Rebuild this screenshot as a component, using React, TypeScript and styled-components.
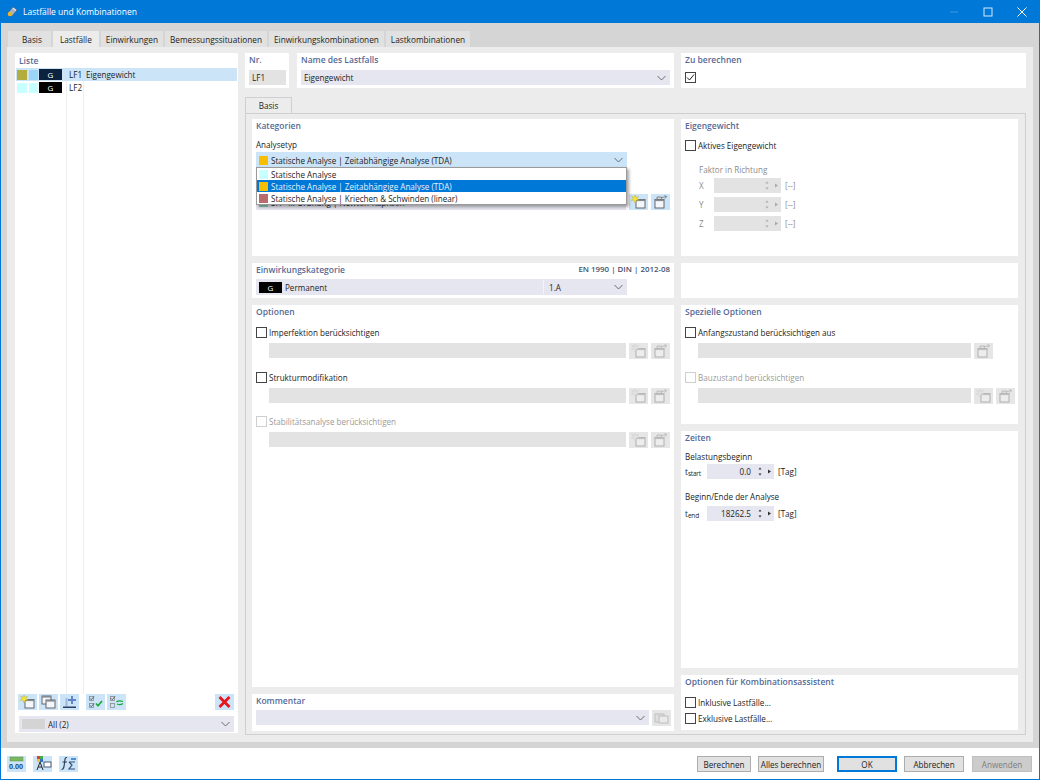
import React from 'react'
import styled, { createGlobalStyle } from 'styled-components'

const GlobalStyle = createGlobalStyle`
  html, body {
    margin: 0;
    padding: 0;
    background: #fff;
  }
  body {
    font-family: "Open Sans", "Liberation Sans", sans-serif;
    font-size: 8.1px;
    color: #1c1c1c;
  }
`

const Window = styled.div`
  width: 1040px;
  height: 780px;
  box-sizing: border-box;
  display: flex;
  flex-direction: column;
  border: 1px solid #0078d7;
  border-top: 0;
  background: #fff;
`

const TitleBar = styled.div`
  height: 23px;
  flex: none;
  background: #0078d7;
  color: #fff;
  display: flex;
  align-items: center;
  padding-left: 6px;
  font-size: 8.5px;
`

const TitleText = styled.span`
  flex: 1;
  margin-left: 5px;
`

const WinButton = styled.div`
  width: 34px;
  height: 23px;
  display: flex;
  align-items: center;
  justify-content: center;
`

const Client = styled.div`
  flex: 1;
  min-height: 0;
  background: #d6d5d6;
  padding: 8px 6px 6px;
  display: flex;
  flex-direction: column;
`

const TabBar = styled.div`
  display: flex;
  height: 16px;
  flex: none;
  padding-left: 1px;
  gap: 2px;
  font-size: 8.25px;
`

const Tab = styled.div<{ $active?: boolean; $left: number; $right: number }>`
  padding: 0 ${p => p.$right}px 0 ${p => p.$left}px;
  display: flex;
  align-items: center;
  background: ${p => (p.$active ? '#ececec' : '#e1e1e1')};
`

const Sheet = styled.div`
  flex: 1;
  min-height: 0;
  background: #ececec;
  padding: 6px 7px 9px 8px;
  display: grid;
  grid-template-columns: 223px 1fr;
  gap: 7px;
`

const Panel = styled.div<{ $h?: number; $w?: number; $grow?: boolean; $pull?: boolean }>`
  background: #fff;
  box-sizing: border-box;
  padding: 1px 4px 0;
  ${p => (p.$h ? `height: ${p.$h}px; flex: none;` : '')}
  ${p => (p.$w ? `width: ${p.$w}px; flex: none;` : '')}
  ${p => (p.$grow ? 'flex: 1; min-height: 0;' : '')}
  ${p => (p.$pull ? 'margin-left: -1px;' : '')}
  position: relative;
`

const ListPanel = styled.div`
  background: #fff;
  display: flex;
  flex-direction: column;
  height: 680px;
`

const Heading = styled.div`
  color: #566a96;
  font-weight: 600;
  height: 11px;
  line-height: 11px;
  font-size: 8.5px;
  display: flex;
  justify-content: space-between;
`

const ListHeading = styled(Heading)`
  padding: 2px 0 2px 4px;
`

const Standard = styled.span`
  color: #47536b;
  font-weight: 600;
  font-size: 7.9px;
`

const ListBody = styled.div`
  flex: 1;
  position: relative;
  background:
    linear-gradient(#eeeeee, #eeeeee) 51px 0 / 1px 100% no-repeat,
    linear-gradient(#eeeeee, #eeeeee) 68px 0 / 1px 100% no-repeat;
`

const ListRow = styled.div<{ $selected?: boolean }>`
  height: 13px;
  margin: 0 1px;
  display: flex;
  align-items: center;
  background: ${p => (p.$selected ? '#cce4f7' : 'transparent')};
`

const Swatch = styled.span<{ $color: string; $w?: number }>`
  width: ${p => p.$w ?? 10}px;
  height: 10px;
  flex: none;
  background: ${p => p.$color};
`

const SwatchGroup = styled.div`
  display: flex;
  gap: 2px;
  margin-left: 1px;
  width: 22px;
`

const Badge = styled.span<{ $color: string; $gap?: number }>`
  width: 23px;
  height: 11px;
  flex: none;
  margin-right: ${p => p.$gap ?? 0}px;
  background: ${p => p.$color};
  color: #fff;
  display: flex;
  align-items: center;
  justify-content: center;
  font-size: 8px;
`

const CaseNo = styled.span`
  width: 17px;
  margin-left: 7px;
  flex: none;
`

const ListFoot = styled.div`
  padding: 0 4px 1px;
`

const IconRow = styled.div`
  display: flex;
  height: 16px;
  margin-left: -1px;
  gap: 2px;
  margin-bottom: 6px;
`

const IconGap = styled.div`
  width: 3px;
  flex: none;
`

const Spacer = styled.div`
  flex: 1;
`

const VGap = styled.div<{ $h: number }>`
  height: ${p => p.$h}px;
`

const IconButton = styled.div<{ $disabled?: boolean }>`
  width: 19px;
  height: 16px;
  flex: none;
  background: ${p => (p.$disabled ? '#e6e6e6' : '#cce4f7')};
  display: flex;
  align-items: center;
  justify-content: center;
  svg {
    opacity: ${p => (p.$disabled ? 0.42 : 1)};
    filter: ${p => (p.$disabled ? 'grayscale(1)' : 'none')};
  }
`

const Select = styled.div<{ $tone?: 'plain' | 'hot'; $w?: number; $h?: number; $drop?: number }>`
  height: ${p => p.$h ?? 16}px;
  box-sizing: border-box;
  background: ${p => (p.$tone === 'hot' ? '#cce4f7' : '#e6e6f0')};
  display: flex;
  align-items: center;
  padding: 0 4px 0 3px;
  margin-top: ${p => p.$drop ?? 0}px;
  ${p => (p.$w ? `width: ${p.$w}px; flex: none;` : 'flex: 1; min-width: 0;')}
`

const SelectText = styled.span`
  flex: 1;
  white-space: nowrap;
  overflow: hidden;
`

const SmallSwatch = styled.span<{ $color: string; $w?: number; $h?: number }>`
  width: ${p => p.$w ?? 9}px;
  height: ${p => p.$h ?? 9}px;
  flex: none;
  margin-right: 3px;
  background: ${p => p.$color};
`

const Chevron = () => (
  <svg width="9" height="6" viewBox="0 0 9 6" fill="none" stroke="#6a6a6a" strokeWidth="1">
    <path d="M.5 1 4.500 5 8.500 1" />
  </svg>
)

type IconKind = 'new' | 'pick' | 'copy' | 'insert' | 'checkGreen' | 'checkSwap' | 'delete' | 'comment' | 'units' | 'model' | 'formula'

const Icon = ({ kind }: { kind: IconKind }) => {
  switch (kind) {
    case 'new':
      return (
        <svg width="15" height="14" viewBox="0 0 15 14">
          <rect x="5" y="4.500" width="9" height="8.500" fill="#f4f7fa" stroke="#55595f" strokeWidth=".9" />
          <rect x="5" y="4.500" width="9" height="1.600" fill="#868a90" />
          <path d="M4 0 4.800 2.400 7.500 1.200 6 3.700 8 5.200 5.300 5.100 4 8 2.900 5.100.2 5.400 2.200 3.600.6 1.200 3.200 2.400Z" fill="#f8e736" stroke="#b5a41c" strokeWidth=".4" />
        </svg>
      )
    case 'pick':
      return (
        <svg width="15" height="14" viewBox="0 0 15 14">
          <rect x="2" y="4.500" width="9" height="8.500" fill="#f4f7fa" stroke="#55595f" strokeWidth=".9" />
          <rect x="2" y="4.500" width="9" height="1.600" fill="#868a90" />
          <path d="M4 4V2H8.500V4" fill="#cfd3d8" stroke="#6f6f6f" strokeWidth=".8" />
          <path d="M9 2.500 13.500 1.500M13.500 1.500 11.500.5M13.500 1.500 12 3.500" fill="none" stroke="#6f6f6f" strokeWidth=".8" />
        </svg>
      )
    case 'copy':
      return (
        <svg width="15" height="14" viewBox="0 0 15 14">
          <rect x="1" y="1" width="9" height="8" fill="#f4f7fa" stroke="#55595f" strokeWidth=".9" />
          <rect x="1" y="1" width="9" height="1.600" fill="#868a90" />
          <rect x="5" y="5" width="9" height="8" fill="#f4f7fa" stroke="#55595f" strokeWidth=".9" />
          <rect x="5" y="5" width="9" height="1.600" fill="#868a90" />
        </svg>
      )
    case 'insert':
      return (
        <svg width="15" height="14" viewBox="0 0 15 14">
          <path d="M3.500 3H5.500V11.500H3.500Z" fill="#9db7dd" />
          <path d="M1 11.500H14V13H1Z" fill="#2c3f63" />
          <path d="M9 1H11V4H14V6H11V9H9V6H6V4H9Z" fill="#5f86c9" />
        </svg>
      )
    case 'checkGreen':
      return (
        <svg width="15" height="14" viewBox="0 0 15 14" fill="none">
          <rect x="1.500" y="1.500" width="4" height="4" stroke="#8a8a8a" strokeWidth=".8" />
          <rect x="1.500" y="8.500" width="4" height="4" stroke="#8a8a8a" strokeWidth=".8" />
          <path d="M2 3.300 3.300 4.700 6 1.500M2 10.300 3.300 11.700 6 8.500" stroke="#444" strokeWidth=".8" />
          <path d="M8 8.500 10 10.800 14 6" stroke="#1ba83b" strokeWidth="1.600" />
        </svg>
      )
    case 'checkSwap':
      return (
        <svg width="15" height="14" viewBox="0 0 15 14" fill="none">
          <rect x="1.500" y="1.500" width="4" height="4" stroke="#8a8a8a" strokeWidth=".8" />
          <rect x="1.500" y="8.500" width="4" height="4" stroke="#8a8a8a" strokeWidth=".8" />
          <path d="M2 3.300 3.300 4.700 6 1.500" stroke="#444" strokeWidth=".8" />
          <path d="M7.500 7C9 5.500 11 5.500 14 6.500M14 8.500C12 10 10 10 8 9" stroke="#1ba83b" strokeWidth="1.300" />
        </svg>
      )
    case 'delete':
      return (
        <svg width="15" height="14" viewBox="0 0 15 14" fill="none">
          <path d="M2.500 2 12.500 12M12.500 2 2.500 12" stroke="#e8141c" strokeWidth="2.800" />
        </svg>
      )
    case 'comment':
      return (
        <svg width="15" height="14" viewBox="0 0 15 14">
          <rect x="1" y="3" width="9" height="8" fill="#d8d8d8" stroke="#8a8a8a" />
          <rect x="5" y="5" width="9" height="7" fill="#f0f0f0" stroke="#8a8a8a" />
        </svg>
      )
    case 'units':
      return (
        <svg width="17" height="15" viewBox="0 0 17 15" fill="none">
          <rect x="2" y="1" width="13" height="4" fill="#7cb860" stroke="#58924a" strokeWidth=".5" />
          <text x="1" y="13" fontSize="7" fontFamily="Open Sans" fill="#2a4c7f" fontWeight="700">0.00</text>
        </svg>
      )
    case 'model':
      return (
        <svg width="18" height="15" viewBox="0 0 18 15">
          <rect x="3" y="0" width="3" height="3" fill="#e53b30" />
          <rect x="6" y="0" width="3" height="3" fill="#3cb04a" />
          <rect x="3" y="3" width="3" height="3" fill="#f2c22e" />
          <rect x="6" y="3" width="3" height="3" fill="#2f6fd0" />
          <path d="M6 6 3 14M6 6 9 14M4 11H8" stroke="#2a2a2a" fill="none" />
          <rect x="10" y="6" width="7" height="5" fill="#fff" stroke="#4a5a70" />
        </svg>
      )
    case 'formula':
      return (
        <svg width="17" height="15" viewBox="0 0 17 15" fill="none">
          <path d="M7 1.500C5 1 5 3 4.500 7S4 13.500 1.500 13.500" stroke="#2a3a52" strokeWidth="1.100" />
          <path d="M2.500 6H7" stroke="#2a3a52" />
          <path d="M9 6H15M9 6 12 9 9 13H15" stroke="#33507c" strokeWidth="1.200" />
          <path d="M11 3H16" stroke="#4d8fd0" strokeWidth="2" />
        </svg>
      )
  }
}

const Check = styled.span<{ $disabled?: boolean }>`
  width: 11px;
  height: 11px;
  box-sizing: border-box;
  flex: none;
  background: #fff;
  border: 1px solid ${p => (p.$disabled ? '#cfcfcf' : '#444')};
  display: flex;
  align-items: center;
  justify-content: center;
`

const CheckRow = styled.div<{ $disabled?: boolean; $top?: number }>`
  display: flex;
  align-items: center;
  gap: 2px;
  height: 11px;
  margin-top: ${p => p.$top ?? 0}px;
  color: ${p => (p.$disabled ? '#9a9a9a' : 'inherit')};
`

const OptionBlock = styled.div`
  height: 44.5px;
  box-sizing: border-box;
`

const OptionField = styled.div<{ $flush?: boolean; $top?: number }>`
  display: flex;
  gap: 3px;
  margin-top: ${p => p.$top ?? 5}px;
  padding-left: ${p => (p.$flush ? 0 : 13)}px;
`

const GreyInput = styled.div<{ $w?: number }>`
  height: 15px;
  background: #e3e3e3;
  ${p => (p.$w ? `width: ${p.$w}px; flex: none;` : 'flex: 1;')}
  display: flex;
  align-items: center;
  padding: 0 3px;
  box-sizing: border-box;
`

const FieldLabel = styled.div<{ $muted?: boolean; $top?: number; $bottom?: number; $left?: number }>`
  color: ${p => (p.$muted ? '#8c8c8c' : 'inherit')};
  height: 12px;
  line-height: 12px;
  margin: ${p => p.$top ?? 0}px 0 ${p => p.$bottom ?? 0}px ${p => p.$left ?? 0}px;
`

const TopRow = styled.div`
  display: flex;
  gap: 8px;
  height: 35px;
  flex: none;
`

const RightColumn = styled.div`
  display: flex;
  flex-direction: column;
  min-width: 0;
`

const SubTab = styled.div`
  margin-top: 9px;
  width: 47px;
  height: 16px;
  flex: none;
  box-sizing: border-box;
  background: #ececec;
  border: 1px solid #cfcfcf;
  border-bottom: 0;
  display: flex;
  align-items: center;
  justify-content: center;
`

const SubSheet = styled.div`
  height: 622px;
  box-sizing: border-box;
  border: 1px solid #cfcfcf;
  padding: 5px 7px 0 6px;
  display: grid;
  grid-template-columns: 422px 337px;
  gap: 7px;
`

const Stack = styled.div<{ $h: number }>`
  display: flex;
  flex-direction: column;
  gap: 7px;
  height: ${p => p.$h}px;
`

const TopField = styled.div<{ $top?: number }>`
  margin-top: ${p => p.$top ?? 5}px;
  display: flex;
`

const Popup = styled.div`
  position: absolute;
  left: 4px;
  top: 48px;
  width: 371px;
  box-sizing: border-box;
  background: #fff;
  border: 1px solid #9b9b9b;
  box-shadow: 2px 2px 3px rgba(0, 0, 0, 0.35);
  z-index: 2;
`

const PopupItem = styled.div<{ $selected?: boolean }>`
  height: 12px;
  display: flex;
  align-items: center;
  padding-left: 2px;
  background: ${p => (p.$selected ? '#0078d7' : 'transparent')};
  color: ${p => (p.$selected ? '#e8f2fb' : 'inherit')};
`

const Divider = styled.span`
  width: 1px;
  height: 14px;
  background: #f3f3f8;
  margin: 0 5px 0 0;
`

const Spin = ({ muted }: { muted?: boolean }) => (
  <svg width="18" height="11" viewBox="0 0 18 11" fill={muted ? '#a9a9a9' : '#333'}>
    <path d="M2.500 3.500 4 1.500 5.500 3.500ZM2.500 7.500 4 9.500 5.500 7.500ZM12 3.500 15 5.500 12 7.500Z" />
  </svg>
)

const UnitRow = styled.div<{ $muted?: boolean }>`
  display: flex;
  align-items: center;
  color: ${p => (p.$muted ? '#8c8c8c' : 'inherit')};
  height: 15px;
`

const AxisLabel = styled.span<{ $w: number }>`
  width: ${p => p.$w}px;
  flex: none;
`

const SpinField = styled.div<{ $muted?: boolean }>`
  width: 67px;
  height: 15px;
  box-sizing: border-box;
  background: ${p => (p.$muted ? '#e3e3e3' : '#e6e6f0')};
  display: flex;
  align-items: center;
  padding-left: 3px;
  margin-right: 4px;
`

const SpinValue = styled.span`
  flex: 1;
  text-align: right;
  padding-right: 5px;
`

const Sub = styled.span`
  font-size: 6.5px;
  letter-spacing: -0.2px;
  vertical-align: -1px;
`

const FactorRows = styled.div`
  display: flex;
  flex-direction: column;
  gap: 4px;
  margin-left: 14px;
`

const Footer = styled.div`
  height: 31px;
  flex: none;
  display: flex;
  align-items: center;
  padding: 0 7px 0 6px;
  gap: 7px;
`

const FooterIcon = styled(IconButton)`
  height: 16px;
`

const PushButton = styled.div<{ $w: number; $primary?: boolean; $disabled?: boolean; $left?: number }>`
  width: ${p => p.$w}px;
  height: 16px;
  flex: none;
  margin: 1px 0 0 ${p => p.$left ?? 0}px;
  box-sizing: border-box;
  background: ${p => (p.$disabled ? '#cccccc' : '#e1e1e1')};
  color: ${p => (p.$disabled ? '#7d7d7d' : 'inherit')};
  border: ${p => (p.$primary ? '2px solid #0078d7' : `1px solid ${p.$disabled ? '#bfbfbf' : '#adadad'}`)};
  display: flex;
  align-items: center;
  justify-content: center;
`

const optionRows = [
  { label: 'Imperfektion berücksichtigen', disabled: false },
  { label: 'Strukturmodifikation', disabled: false },
  { label: 'Stabilitätsanalyse berücksichtigen', disabled: true },
]

const tabs = [
  { label: 'Basis', left: 14, right: 9 },
  { label: 'Lastfälle', left: 7, right: 7 },
  { label: 'Einwirkungen', left: 5, right: 5 },
  { label: 'Bemessungssituationen', left: 5, right: 5 },
  { label: 'Einwirkungskombinationen', left: 5, right: 5 },
  { label: 'Lastkombinationen', left: 5, right: 5 },
]

const CornerIcon = () => (
  <svg width="11" height="11" viewBox="0 0 11 11">
    <path d="M1 7 6 1 10 4 5 10Z" fill="#a8b4c4" stroke="#56606e" strokeWidth=".6" />
    <circle cx="3" cy="8" r="2.300" fill="#e8b52c" />
    <path d="M6 2 9 4.500" stroke="#fff" />
  </svg>
)

export default function App () {
  return (
    <Window>
      <GlobalStyle />
      <TitleBar>
        <CornerIcon />
        <TitleText>Lastfälle und Kombinationen</TitleText>
        <WinButton>
          <svg width="10" height="10" viewBox="0 0 10 10"><path d="M1 5H9" stroke="#3f97e0" /></svg>
        </WinButton>
        <WinButton>
          <svg width="10" height="10" viewBox="0 0 10 10" fill="none"><rect x="1" y="1" width="8" height="8" stroke="#d6eafa" /></svg>
        </WinButton>
        <WinButton>
          <svg width="10" height="10" viewBox="0 0 10 10" fill="none"><path d="M.5.5 9.500 9.500M9.500.5.5 9.500" stroke="#fff" /></svg>
        </WinButton>
      </TitleBar>

      <Client>
        <TabBar>
          {tabs.map((t) => (
            <Tab key={t.label} $left={t.left} $right={t.right} $active={t.label === 'Lastfälle'}>{t.label}</Tab>
          ))}
        </TabBar>
        <Sheet>
          <ListPanel>
            <ListHeading>Liste</ListHeading>
            <ListBody>
              <ListRow $selected>
                <SwatchGroup>
                  <Swatch $color="#b3ad3d" />
                  <Swatch $color="#9ad4f6" $w={9} />
                </SwatchGroup>
                <Badge $color="#0c2340">G</Badge>
                <CaseNo>LF1</CaseNo>
                <span>Eigengewicht</span>
              </ListRow>
              <ListRow>
                <SwatchGroup>
                  <Swatch $color="#c8ffff" />
                  <Swatch $color="#c8ffff" $w={9} />
                </SwatchGroup>
                <Badge $color="#000">G</Badge>
                <CaseNo>LF2</CaseNo>
              </ListRow>
            </ListBody>
            <ListFoot>
              <IconRow>
                <IconButton><Icon kind="new" /></IconButton>
                <IconButton><Icon kind="copy" /></IconButton>
                <IconButton><Icon kind="insert" /></IconButton>
                <IconGap />
                <IconButton><Icon kind="checkGreen" /></IconButton>
                <IconButton><Icon kind="checkSwap" /></IconButton>
                <Spacer />
                <IconButton><Icon kind="delete" /></IconButton>
              </IconRow>
              <Select>
                <SmallSwatch $color="#d4d4d4" $w={23} $h={10} />
                <SelectText>All (2)</SelectText>
                <Chevron />
              </Select>
            </ListFoot>
          </ListPanel>

          <RightColumn>
            <TopRow>
              <Panel $w={44}>
                <Heading>Nr.</Heading>
                <TopField><GreyInput $w={37}>LF1</GreyInput></TopField>
              </Panel>
              <Panel $w={377}>
                <Heading>Name des Lastfalls</Heading>
                <TopField>
                  <Select $h={15}>
                    <SelectText>Eigengewicht</SelectText>
                    <Chevron />
                  </Select>
                </TopField>
              </Panel>
              <Panel $w={345} $pull>
                <Heading>Zu berechnen</Heading>
                <TopField $top={7}>
                  <Check>
                    <svg width="9" height="9" viewBox="0 0 9 9" fill="none"><path d="M1 4.500 3.500 7 8 1.500" stroke="#222" /></svg>
                  </Check>
                </TopField>
              </Panel>
            </TopRow>

            <SubTab>Basis</SubTab>
            <SubSheet>
              <Stack $h={612}>
                <Panel $h={137}>
                  <Heading>Kategorien</Heading>
                  <FieldLabel $top={8}>Analysetyp</FieldLabel>
                  <Select $tone="hot" $w={371} $drop={1}>
                    <SmallSwatch $color="#f7bf00" />
                    <SelectText>Statische Analyse | Zeitabhängige Analyse (TDA)</SelectText>
                    <Chevron />
                  </Select>
                  <Popup>
                    <PopupItem><SmallSwatch $color="#c8ffff" />Statische Analyse</PopupItem>
                    <PopupItem $selected><SmallSwatch $color="#f7bf00" />Statische Analyse | Zeitabhängige Analyse (TDA)</PopupItem>
                    <PopupItem><SmallSwatch $color="#b96a6a" />Statische Analyse | Kriechen &amp; Schwinden (linear)</PopupItem>
                  </Popup>
                  <OptionField $flush $top={26}>
                    <Select>
                      <SmallSwatch $color="#8fc9b0" />
                      <SelectText>SH - II. Ordnung | Newton-Raphson</SelectText>
                    </Select>
                    <IconButton><Icon kind="new" /></IconButton>
                    <IconButton><Icon kind="pick" /></IconButton>
                  </OptionField>
                </Panel>
                <Panel $h={35}>
                  <Heading>Einwirkungskategorie<Standard>EN 1990 | DIN | 2012-08</Standard></Heading>
                  <TopField $top={4}>
                    <Select $w={371}>
                      <Badge $color="#000" $gap={3}>G</Badge>
                      <SelectText>Permanent</SelectText>
                      <Divider />
                      <AxisLabel $w={65}>1.A</AxisLabel>
                      <Chevron />
                    </Select>
                  </TopField>
                </Panel>
                <Panel $grow>
                  <Heading>Optionen</Heading>
                  <VGap $h={10} />
                  {optionRows.map((o) => (
                    <OptionBlock key={o.label}>
                      <CheckRow $disabled={o.disabled}>
                        <Check $disabled={o.disabled} />
                        {o.label}
                      </CheckRow>
                      <OptionField>
                        <GreyInput />
                        <IconButton $disabled><Icon kind="new" /></IconButton>
                        <IconButton $disabled><Icon kind="pick" /></IconButton>
                      </OptionField>
                    </OptionBlock>
                  ))}
                </Panel>
                <Panel $h={37}>
                  <Heading>Kommentar</Heading>
                  <OptionField $flush $top={4}>
                    <Select $w={393} $h={15}>
                      <SelectText />
                      <Chevron />
                    </Select>
                    <IconButton $disabled><Icon kind="comment" /></IconButton>
                  </OptionField>
                </Panel>
              </Stack>

              <Stack $h={611}>
                <Panel $h={137}>
                  <Heading>Eigengewicht</Heading>
                  <CheckRow $top={9}>
                    <Check />
                    Aktives Eigengewicht
                  </CheckRow>
                  <FieldLabel $muted $top={13} $bottom={2} $left={14}>Faktor in Richtung</FieldLabel>
                  <FactorRows>
                    {['X', 'Y', 'Z'].map((a) => (
                      <UnitRow key={a} $muted>
                        <AxisLabel $w={15}>{a}</AxisLabel>
                        <SpinField $muted>
                          <SpinValue />
                          <Spin muted />
                        </SpinField>
                        [--]
                      </UnitRow>
                    ))}
                  </FactorRows>
                </Panel>
                <Panel $h={35} />
                <Panel $h={119}>
                  <Heading>Spezielle Optionen</Heading>
                  <VGap $h={10} />
                  <OptionBlock>
                    <CheckRow>
                      <Check />
                      Anfangszustand berücksichtigen aus
                    </CheckRow>
                    <OptionField>
                      <GreyInput $w={273} />
                      <IconButton $disabled><Icon kind="pick" /></IconButton>
                    </OptionField>
                  </OptionBlock>
                  <OptionBlock>
                    <CheckRow $disabled>
                      <Check $disabled />
                      Bauzustand berücksichtigen
                    </CheckRow>
                    <OptionField>
                      <GreyInput $w={273} />
                      <IconButton $disabled><Icon kind="new" /></IconButton>
                      <IconButton $disabled><Icon kind="pick" /></IconButton>
                    </OptionField>
                  </OptionBlock>
                </Panel>
                <Panel $grow>
                  <Heading>Zeiten</Heading>
                  <FieldLabel $top={8} $bottom={1}>Belastungsbeginn</FieldLabel>
                  <UnitRow>
                    <AxisLabel $w={22}>t<Sub>start</Sub></AxisLabel>
                    <SpinField>
                      <SpinValue>0.0</SpinValue>
                      <Spin />
                    </SpinField>
                    [Tag]
                  </UnitRow>
                  <FieldLabel $top={12} $bottom={3}>Beginn/Ende der Analyse</FieldLabel>
                  <UnitRow>
                    <AxisLabel $w={22}>t<Sub>end</Sub></AxisLabel>
                    <SpinField>
                      <SpinValue>18262.5</SpinValue>
                      <Spin />
                    </SpinField>
                    [Tag]
                  </UnitRow>
                </Panel>
                <Panel $h={55}>
                  <Heading>Optionen für Kombinationsassistent</Heading>
                  <CheckRow $top={10}>
                    <Check />
                    Inklusive Lastfälle...
                  </CheckRow>
                  <CheckRow $top={5}>
                    <Check />
                    Exklusive Lastfälle...
                  </CheckRow>
                </Panel>
              </Stack>
            </SubSheet>
          </RightColumn>
        </Sheet>
      </Client>

      <Footer>
        <FooterIcon><Icon kind="units" /></FooterIcon>
        <FooterIcon><Icon kind="model" /></FooterIcon>
        <FooterIcon><Icon kind="formula" /></FooterIcon>
        <Spacer />
        <PushButton $w={54}>Berechnen</PushButton>
        <PushButton $w={66}>Alles berechnen</PushButton>
        <PushButton $w={60} $primary $left={6}>OK</PushButton>
        <PushButton $w={60}>Abbrechen</PushButton>
        <PushButton $w={60} $disabled $left={1}>Anwenden</PushButton>
      </Footer>
    </Window>
  )
}
